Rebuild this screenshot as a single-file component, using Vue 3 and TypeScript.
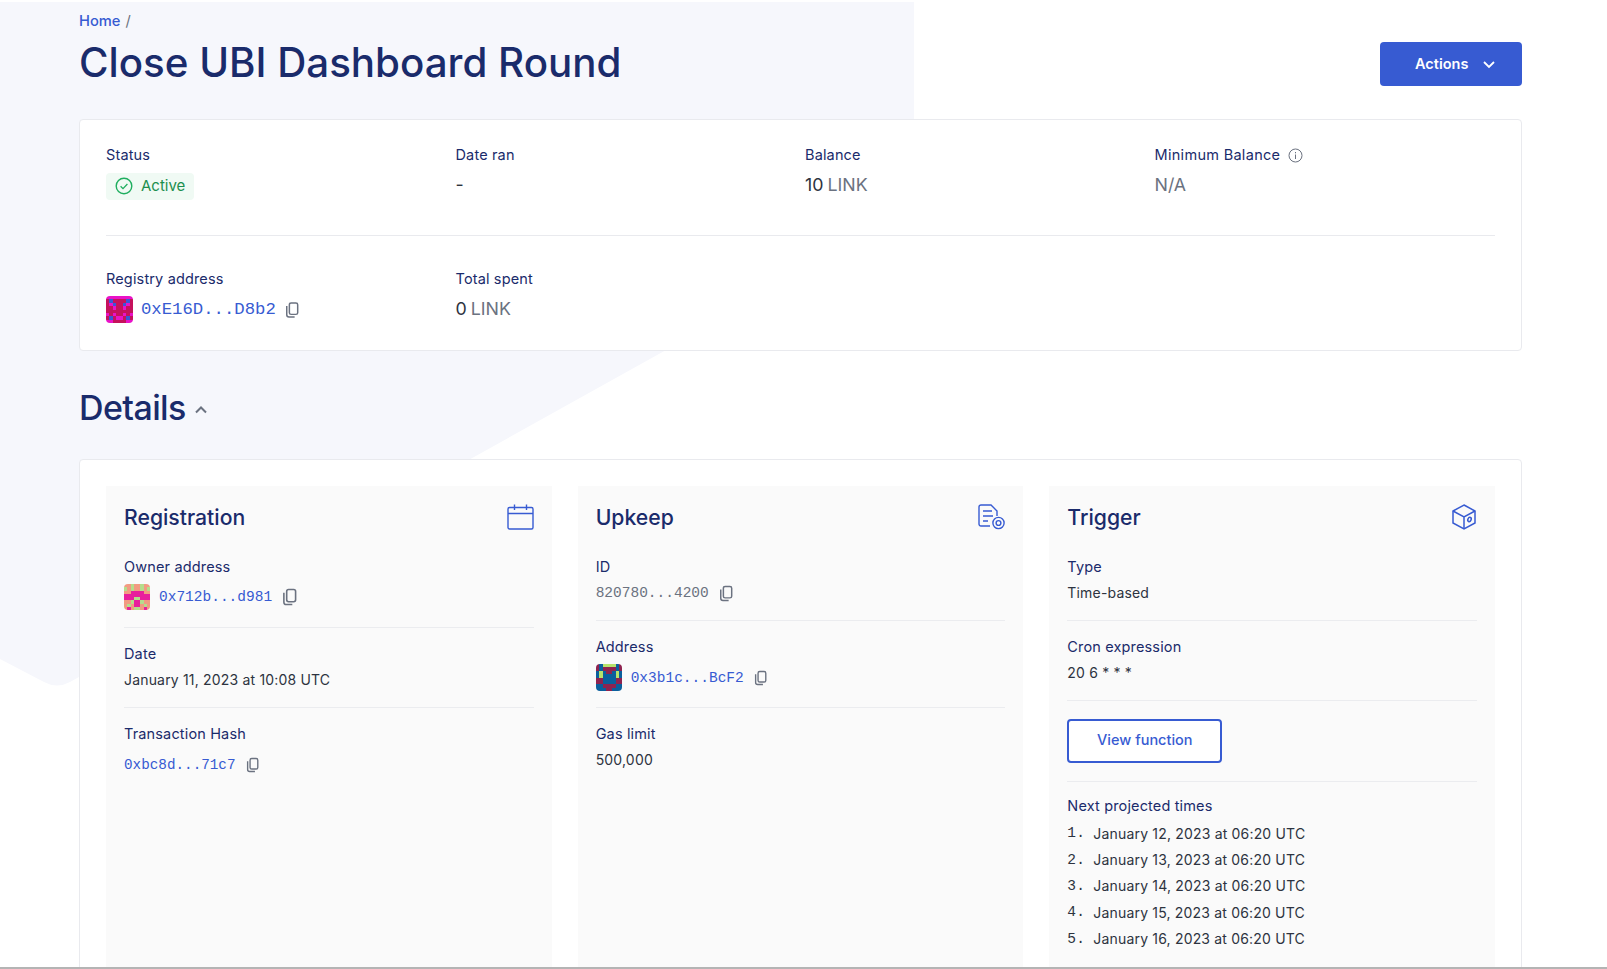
<script setup lang="ts">
interface Avatar {
  colors: Record<string, string>
  rows: string[]
}

const registryAvatar: Avatar = {
  colors: { m: '#e912c8', c: '#c5125c', b: '#3b57d6' },
  rows: ['mmmmmmmm', 'cbccccbc', 'cmbccbmc', 'ccmccmcc', 'cccccccc', 'mcmccmcm', 'cbcmmcbc', 'mmccccmm'],
}

const ownerAvatar: Avatar = {
  colors: { s: '#f29b82', g: '#b5dd8c', p: '#e81f9c' },
  rows: ['ssgssgss', 'gsgssgsg', 'ssppppss', 'pppppppp', 'pppggppp', 'ssgppgss', 'sgsppsgs', 'spsggsps'],
}

const upkeepAvatar: Avatar = {
  colors: { b: '#0b5f9d', c: '#8f2350', g: '#b7e36c' },
  rows: ['cbggggbc', 'cbccccbc', 'bgbccbgb', 'bgbbbbgb', 'ccbbbbcc', 'ccbbbbcc', 'bbccccbb', 'bbbccbbb'],
}

const projectedTimes: string[] = [
  'January 12, 2023 at 06:20 UTC',
  'January 13, 2023 at 06:20 UTC',
  'January 14, 2023 at 06:20 UTC',
  'January 15, 2023 at 06:20 UTC',
  'January 16, 2023 at 06:20 UTC',
]

function cells(avatar: Avatar) {
  const out: { x: number; y: number; fill: string }[] = []
  avatar.rows.forEach((row, y) => {
    row.split('').forEach((key, x) => {
      out.push({ x, y, fill: avatar.colors[key] })
    })
  })
  return out
}

const registryCells = cells(registryAvatar)
const ownerCells = cells(ownerAvatar)
const upkeepCells = cells(upkeepAvatar)
</script>

<template>
  <div class="page">
    <svg class="backdrop" width="914" height="700" viewBox="0 0 914 700">
      <path d="M0 0H914V210L70 680Q57 687 44 680L0 657Z" fill="#f6f7fc" />
    </svg>

    <svg width="0" height="0" class="defs">
      <symbol id="copy" viewBox="0 0 16 18">
        <rect x="5" y="1" width="9.5" height="13" rx="2" fill="none" stroke="currentColor" stroke-width="1.7" />
        <path d="M2 4.5V14.5A2.5 2.5 0 0 0 4.5 17H11" fill="none" stroke="currentColor" stroke-width="1.7" />
      </symbol>
    </svg>

    <div class="content">
      <header class="top">
        <div>
          <div class="crumbs"><a class="home">Home</a> <span class="slash">/</span></div>
          <h1>Close UBI Dashboard Round</h1>
        </div>
        <button class="actions">
          <span class="actions-text">Actions</span>
          <svg width="14" height="14" viewBox="0 0 14 14"><path d="M2 5l5 5 5-5" fill="none" stroke="#fff" stroke-width="1.8" /></svg>
        </button>
      </header>

      <section class="card summary">
        <div class="stats">
          <div>
            <div class="label">Status</div>
            <div class="badge">
              <svg class="badge-icon" width="18" height="18" viewBox="0 0 18 18">
                <circle cx="9" cy="9" r="7.8" fill="none" stroke="#1fae5f" stroke-width="1.4" />
                <path d="M5.6 9.2l2.4 2.4 4.4-4.6" fill="none" stroke="#1fae5f" stroke-width="1.3" />
              </svg>
              <span class="badge-text">Active</span>
            </div>
          </div>
          <div>
            <div class="label">Date ran</div>
            <div class="big">-</div>
          </div>
          <div>
            <div class="label">Balance</div>
            <div class="big">10 <span class="unit">LINK</span></div>
          </div>
          <div>
            <div class="label info-label">
              Minimum Balance
              <svg width="15" height="15" viewBox="0 0 15 15">
                <circle cx="7.5" cy="7.5" r="6.5" fill="none" stroke="#6b7280" />
                <path d="M7.5 6.5v4.5M7.5 4v1.3" stroke="#6b7280" />
              </svg>
            </div>
            <div class="big unit">N/A</div>
          </div>
        </div>
        <hr class="rule" />
        <div class="stats">
          <div>
            <div class="label">Registry address</div>
            <div class="addr-line big-addr">
              <svg class="avatar" width="27" height="27" viewBox="0 0 8 8" shape-rendering="crispEdges">
                <rect v-for="c in registryCells" :key="`${c.x}-${c.y}`" :x="c.x" :y="c.y" width="1" height="1" :fill="c.fill" />
              </svg>
              <a class="mono">0xE16D...D8b2</a>
              <svg class="copy" width="14" height="16"><use href="#copy" /></svg>
            </div>
          </div>
          <div>
            <div class="label">Total spent</div>
            <div class="big">0 <span class="unit">LINK</span></div>
          </div>
        </div>
      </section>

      <h2 class="details">
        Details
        <svg class="fold" width="14" height="14" viewBox="0 0 14 14"><path d="M2 9.5l5-5 5 5" fill="none" stroke="#6b7280" stroke-width="2" /></svg>
      </h2>

      <section class="card panels">
        <div class="panel">
          <div class="panel-head">
            <h3>Registration</h3>
            <svg width="27" height="26" viewBox="0 0 27 26" fill="none" stroke="#375bd2" stroke-width="1.4">
              <rect x="1" y="3.5" width="25" height="21.5" rx="1.5" />
              <path d="M1 9.5H26M7.5 0.5V6M19.5 0.5V6" />
            </svg>
          </div>
          <div class="row">
            <div class="label">Owner address</div>
            <div class="addr-line">
              <svg class="avatar" width="26" height="26" viewBox="0 0 8 8" shape-rendering="crispEdges">
                <rect v-for="c in ownerCells" :key="`${c.x}-${c.y}`" :x="c.x" :y="c.y" width="1" height="1" :fill="c.fill" />
              </svg>
              <a class="mono">0x712b...d981</a>
              <svg class="copy" width="15" height="18"><use href="#copy" /></svg>
            </div>
          </div>
          <div class="row">
            <div class="label">Date</div>
            <div class="value">January 11, 2023 at 10:08 UTC</div>
          </div>
          <div class="row last">
            <div class="label">Transaction Hash</div>
            <div class="addr-line hash">
              <a class="mono">0xbc8d...71c7</a>
              <svg class="copy" width="13" height="16"><use href="#copy" /></svg>
            </div>
          </div>
        </div>

        <div class="panel">
          <div class="panel-head">
            <h3>Upkeep</h3>
            <svg width="27" height="26" viewBox="0 0 27 26" fill="none" stroke="#375bd2" stroke-width="1.4">
              <path d="M12 22H3A2 2 0 0 1 1 20V3A2 2 0 0 1 3 1H13L19 7V12" />
              <path d="M5 7H14M5 12H15M5 17H10" />
              <circle cx="20.5" cy="19" r="5.6" />
              <circle cx="20.5" cy="19" r="2.4" />
            </svg>
          </div>
          <div class="row">
            <div class="label">ID</div>
            <div class="addr-line id-line">
              <span class="mono grey">820780...4200</span>
              <svg class="copy" width="14" height="17"><use href="#copy" /></svg>
            </div>
          </div>
          <div class="row tight">
            <div class="label">Address</div>
            <div class="addr-line">
              <svg class="avatar" width="26" height="27" viewBox="0 0 8 8" preserveAspectRatio="none" shape-rendering="crispEdges">
                <rect v-for="c in upkeepCells" :key="`${c.x}-${c.y}`" :x="c.x" :y="c.y" width="1" height="1" :fill="c.fill" />
              </svg>
              <a class="mono">0x3b1c...BcF2</a>
              <svg class="copy" width="13" height="16"><use href="#copy" /></svg>
            </div>
          </div>
          <div class="row last">
            <div class="label">Gas limit</div>
            <div class="value">500,000</div>
          </div>
        </div>

        <div class="panel">
          <div class="panel-head">
            <h3>Trigger</h3>
            <svg class="cube" width="24" height="26" viewBox="0 0 24 26" fill="none" stroke="#375bd2" stroke-width="1.5">
              <path d="M12 1L23 7V19L12 25L1 19V7Z" />
              <path d="M1 7L12 13L23 7M12 13V25" />
              <ellipse cx="17.5" cy="15.5" rx="1.6" ry="2.2" transform="rotate(25 17.5 15.5)" />
            </svg>
          </div>
          <div class="row">
            <div class="label">Type</div>
            <div class="value">Time-based</div>
          </div>
          <div class="row">
            <div class="label">Cron expression</div>
            <div class="value">20 6 * * *</div>
          </div>
          <div class="row button-row">
            <button class="outline">View function</button>
          </div>
          <div class="row last times">
            <div class="label">Next projected times</div>
            <ol>
              <li v-for="(t, i) in projectedTimes" :key="t">
                <span class="num">{{ i + 1 }}.</span>
                <span>{{ t }}</span>
              </li>
            </ol>
          </div>
        </div>
      </section>
    </div>
  </div>
</template>

<style>
html, body {
  margin: 0;
  background: #fff;
  overflow: hidden;
}
</style>

<style scoped>
.page {
  position: relative;
  height: 969px;
  box-sizing: border-box;
  overflow: hidden;
  border-bottom: 2px solid #b4b4b4;
  font-family: Inter, "Liberation Sans", sans-serif;
  color: #1a2b6b;
}

.backdrop {
  position: absolute;
  top: 2px;
  left: 0;
}

.defs {
  position: absolute;
}

.content {
  position: relative;
  padding: 11px 85px 0 79px;
}

.top {
  display: flex;
  justify-content: space-between;
  align-items: flex-end;
  margin-bottom: 33px;
}

.crumbs {
  font-size: 14.7px;
  line-height: 20px;
  font-weight: 500;
}

.home {
  color: #375bd2;
}

.slash {
  margin-left: 1px;
  color: #6b7280;
  font-weight: 400;
}

h1 {
  margin: 7px 0 0;
  padding-top: 2px;
  font-size: 40.3px;
  line-height: 46px;
  font-weight: 500;
}

.actions {
  display: flex;
  align-items: center;
  gap: 14px;
  width: 142px;
  height: 44px;
  padding: 0 0 0 35px;
  border: 0;
  border-radius: 4px;
  background: #375bd2;
  color: #fff;
  font: 600 14.5px Inter, sans-serif;
}

.actions-text {
  padding-bottom: 2px;
}

.card {
  background: #fff;
  border: 1px solid #e9eaee;
  border-radius: 4px;
}

.summary {
  padding: 25px 26px 27px;
}

.stats {
  display: grid;
  grid-template-columns: repeat(4, 349.5px);
}

.label {
  font-size: 14.5px;
  line-height: 20px;
  letter-spacing: 0.15px;
  color: #1a2b6b;
}

.info-label {
  display: flex;
  align-items: center;
  gap: 8px;
  letter-spacing: 0.3px;
}

.badge {
  display: inline-flex;
  align-items: center;
  gap: 8px;
  height: 27px;
  margin-top: 8px;
  padding: 0 9px;
  border-radius: 4px;
  background: #f0faf4;
  color: #1c8f4e;
  font-size: 15px;
}

.badge-icon {
  margin-bottom: 1px;
}

.badge-text {
  padding-bottom: 2px;
}

.big {
  margin-top: 6px;
  font-size: 17.8px;
  line-height: 27px;
  word-spacing: -1px;
  color: #2d3340;
}

.unit {
  color: #6b7280;
}

.rule {
  height: 1px;
  margin: 35px 0 33px;
  border: 0;
  background: #e9eaee;
}

.addr-line {
  display: flex;
  align-items: center;
  margin-top: 7px;
}

.avatar {
  flex: none;
  border-radius: 4px;
}

.mono {
  margin-left: 9px;
  font-family: "Liberation Mono", monospace;
  font-size: 14.5px;
  color: #375bd2;
}

.big-addr .mono {
  margin-left: 8px;
  font-size: 17.3px;
}

.copy {
  margin-left: 10px;
  color: #6b7280;
}

.big-addr .copy {
  margin-left: 9px;
}

.hash {
  margin-top: 11px;
  height: 20px;
}

.hash .mono {
  margin-left: 0;
  font-size: 14.3px;
}

.id-line {
  margin-top: 6px;
  height: 20px;
}

.id-line .mono {
  margin-left: 0;
}

.grey {
  color: #6b7280;
}

.details {
  display: flex;
  align-items: center;
  gap: 8px;
  margin: 35px 0 29px;
  font-size: 34px;
  line-height: 44px;
  font-weight: 500;
  letter-spacing: -0.6px;
}

.fold {
  margin-top: 3px;
}

.panels {
  display: grid;
  grid-template-columns: repeat(3, 1fr);
  gap: 26px;
  padding: 26px 26px 0;
  height: 560px;
}

.panel {
  padding: 16px 18px 0;
  background: #fafafa;
}

.panel-head {
  display: flex;
  justify-content: space-between;
  align-items: center;
  height: 30px;
  margin-bottom: 9px;
}

.cube {
  margin-right: 1px;
}

h3 {
  margin: 0;
  font-size: 21.2px;
  line-height: 30px;
  font-weight: 500;
}

.row {
  padding: 16px 0 17px;
  border-bottom: 1px solid #ebecef;
}

.tight {
  padding-bottom: 16px;
}

.last {
  border-bottom: 0;
}

.value {
  margin-top: 6px;
  font-size: 14px;
  line-height: 20px;
  letter-spacing: 0.18px;
  color: #2d3340;
}

.button-row {
  padding: 18px 0;
}

.outline {
  display: block;
  width: 155px;
  height: 44px;
  padding: 0 0 3px;
  border: 2px solid #375bd2;
  border-radius: 4px;
  background: #fff;
  color: #375bd2;
  font: 500 14.5px Inter, sans-serif;
}

.times {
  padding-top: 14px;
}

ol {
  margin: 4px 0 0;
  padding: 0;
  list-style: none;
}

li {
  display: flex;
  align-items: center;
  height: 26.4px;
  font-size: 14px;
  letter-spacing: 0.18px;
  color: #2d3340;
}

.num {
  width: 26px;
  font-family: "Liberation Mono", monospace;
  font-size: 14.5px;
}
</style>
